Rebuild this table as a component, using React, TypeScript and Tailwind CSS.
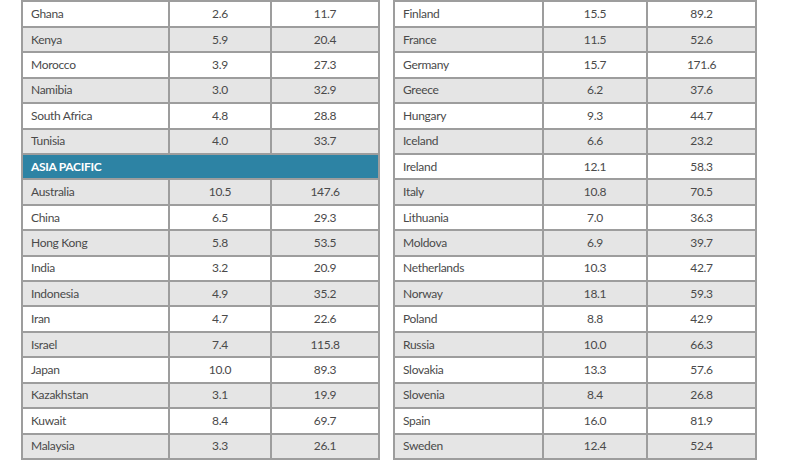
import React from 'react';

type Row = { name: string; a?: string; b?: string; header?: boolean };

const left: Row[] = [
    { name: '', a: '', b: '' },
    { name: 'Ghana', a: '2.6', b: '11.7' },
    { name: 'Kenya', a: '5.9', b: '20.4' },
    { name: 'Morocco', a: '3.9', b: '27.3' },
    { name: 'Namibia', a: '3.0', b: '32.9' },
    { name: 'South Africa', a: '4.8', b: '28.8' },
    { name: 'Tunisia', a: '4.0', b: '33.7' },
    { name: 'ASIA PACIFIC', header: true },
    { name: 'Australia', a: '10.5', b: '147.6' },
    { name: 'China', a: '6.5', b: '29.3' },
    { name: 'Hong Kong', a: '5.8', b: '53.5' },
    { name: 'India', a: '3.2', b: '20.9' },
    { name: 'Indonesia', a: '4.9', b: '35.2' },
    { name: 'Iran', a: '4.7', b: '22.6' },
    { name: 'Israel', a: '7.4', b: '115.8' },
    { name: 'Japan', a: '10.0', b: '89.3' },
    { name: 'Kazakhstan', a: '3.1', b: '19.9' },
    { name: 'Kuwait', a: '8.4', b: '69.7' },
    { name: 'Malaysia', a: '3.3', b: '26.1' },
];

const right: Row[] = [
    { name: '', a: '', b: '' },
    { name: 'Finland', a: '15.5', b: '89.2' },
    { name: 'France', a: '11.5', b: '52.6' },
    { name: 'Germany', a: '15.7', b: '171.6' },
    { name: 'Greece', a: '6.2', b: '37.6' },
    { name: 'Hungary', a: '9.3', b: '44.7' },
    { name: 'Iceland', a: '6.6', b: '23.2' },
    { name: 'Ireland', a: '12.1', b: '58.3' },
    { name: 'Italy', a: '10.8', b: '70.5' },
    { name: 'Lithuania', a: '7.0', b: '36.3' },
    { name: 'Moldova', a: '6.9', b: '39.7' },
    { name: 'Netherlands', a: '10.3', b: '42.7' },
    { name: 'Norway', a: '18.1', b: '59.3' },
    { name: 'Poland', a: '8.8', b: '42.9' },
    { name: 'Russia', a: '10.0', b: '66.3' },
    { name: 'Slovakia', a: '13.3', b: '57.6' },
    { name: 'Slovenia', a: '8.4', b: '26.8' },
    { name: 'Spain', a: '16.0', b: '81.9' },
    { name: 'Sweden', a: '12.4', b: '52.4' },
];

const Table = ({ rows, cols, width }: { rows: Row[]; cols: string; width: string }) => {
    // stripes restart under each region header
    let stripe = 0;
    return (
        <div className={`flex flex-col -mt-[23px] border-x-2 border-[#9d9d9d] ${width}`}>
            {rows.map((r, i) => {
                if (r.header) {
                    stripe = 0;
                    return (
                        <div
                            key={i}
                            className="h-[25.6px] border-b-2 border-[#9d9d9d] bg-[#2d83a4] flex items-center pl-[8px] text-[12px] font-bold text-white tracking-tight"
                        >
                            {r.name}
                        </div>
                    );
                }
                const gray = stripe % 2 === 0;
                stripe++;
                return (
                    <div
                        key={i}
                        className={`h-[25.6px] border-b-2 border-[#9d9d9d] grid ${cols} ${gray ? 'bg-[#e5e5e5]' : 'bg-white'}`}
                    >
                        <div className="flex items-center pl-[8px] border-r-2 border-[#9d9d9d]">{r.name}</div>
                        <div className="flex items-center justify-center border-r-2 border-[#9d9d9d]">{r.a}</div>
                        <div className="flex items-center justify-center">{r.b}</div>
                    </div>
                );
            })}
        </div>
    );
};

export default function App() {
    return (
        <div
            className="w-[800px] h-[460px] overflow-hidden bg-white flex pl-[21px] gap-[13px] text-[12px] text-[#4a4a4a] tracking-tight"
            style={{ fontFamily: 'Lato, "Open Sans", sans-serif' }}
        >
            <Table rows={left} cols="grid-cols-[147px_102px_1fr]" width="w-[359px]" />
            <Table rows={right} cols="grid-cols-[149px_104px_1fr]" width="w-[364px]" />
        </div>
    );
}
